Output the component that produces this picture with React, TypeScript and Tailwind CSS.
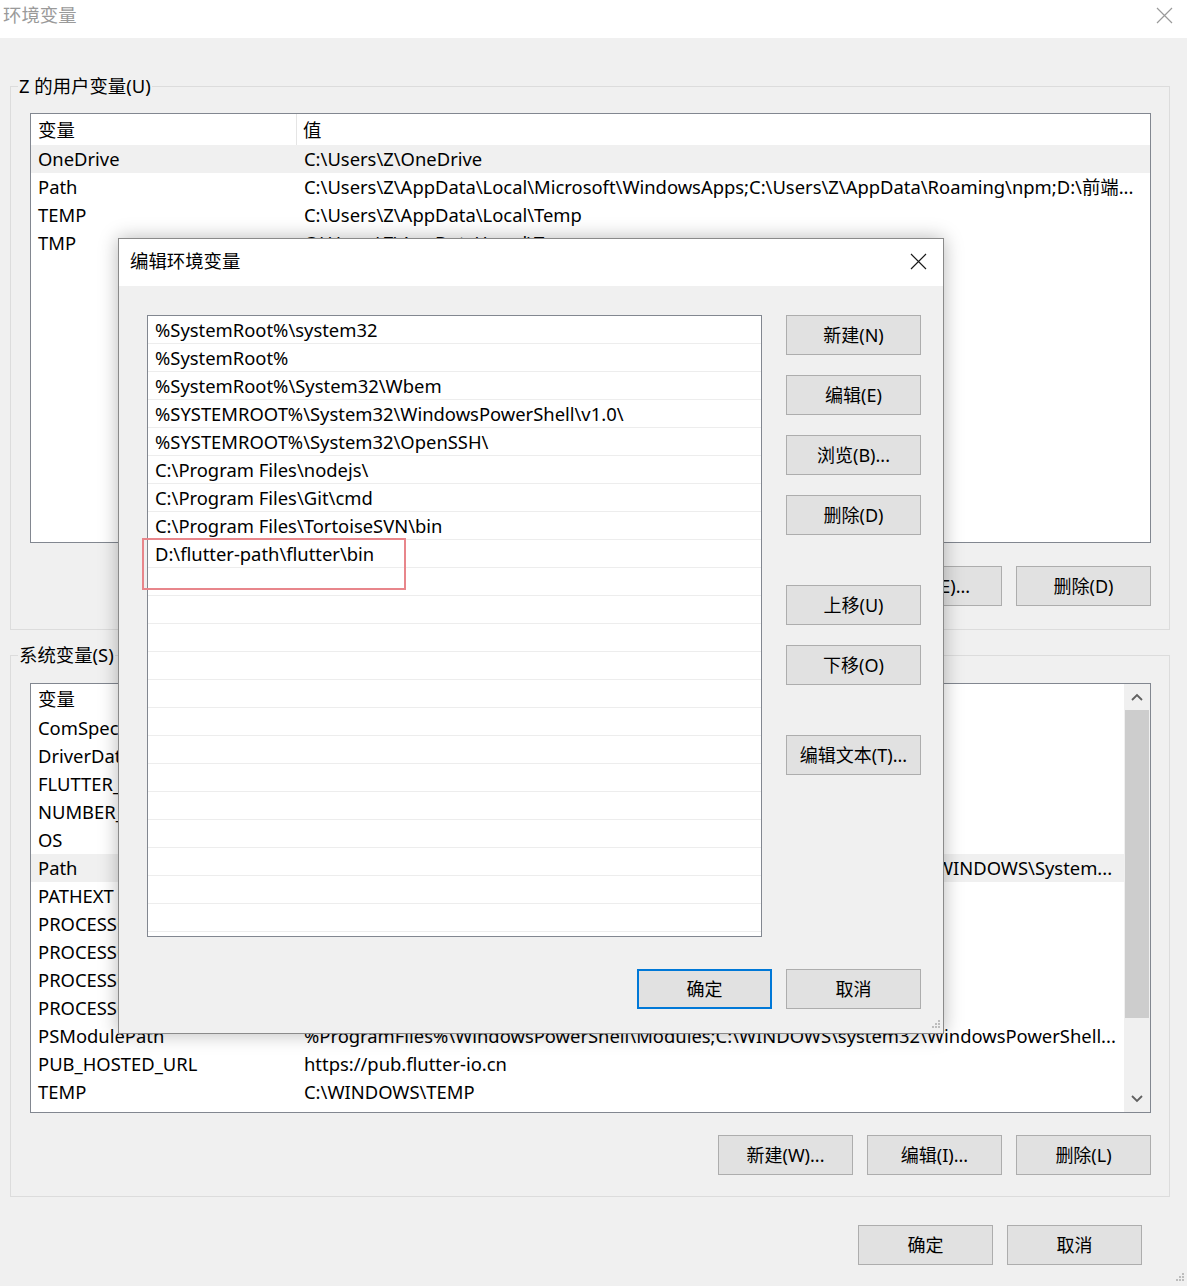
import React from 'react';

const font = "font-['Noto_Sans','Noto_Sans_CJK_SC',sans-serif]";

const userVars = [
  { name: 'OneDrive', value: 'C:\\Users\\Z\\OneDrive', selected: true },
  { name: 'Path', value: 'C:\\Users\\Z\\AppData\\Local\\Microsoft\\WindowsApps;C:\\Users\\Z\\AppData\\Roaming\\npm;D:\\前端...' },
  { name: 'TEMP', value: 'C:\\Users\\Z\\AppData\\Local\\Temp' },
  { name: 'TMP', value: 'C:\\Users\\Z\\AppData\\Local\\Temp' },
];

const systemVars = [
  { name: 'ComSpec', value: 'C:\\WINDOWS\\system32\\cmd.exe' },
  { name: 'DriverData', value: 'C:\\Windows\\System32\\Drivers\\DriverData' },
  { name: 'FLUTTER_STORAGE_BASE_URL', value: 'https://storage.flutter-io.cn' },
  { name: 'NUMBER_OF_PROCESSORS', value: '8' },
  { name: 'OS', value: 'Windows_NT' },
  { name: 'Path', value: 'C:\\WINDOWS\\system32;C:\\WINDOWS;C:\\WINDOWS\\System32\\Wbem;;C:\\WINDOWS\\System...', selected: true },
  { name: 'PATHEXT', value: '.COM;.EXE;.BAT;.CMD;.VBS;.VBE;.JS;.JSE;.WSF;.WSH;.MSC' },
  { name: 'PROCESSOR_ARCHITECTURE', value: 'AMD64' },
  { name: 'PROCESSOR_IDENTIFIER', value: 'Intel64 Family 6 Model 142 Stepping 10, GenuineIntel' },
  { name: 'PROCESSOR_LEVEL', value: '6' },
  { name: 'PROCESSOR_REVISION', value: '8e0a' },
  { name: 'PSModulePath', value: '%ProgramFiles%\\WindowsPowerShell\\Modules;C:\\WINDOWS\\system32\\WindowsPowerShell...' },
  { name: 'PUB_HOSTED_URL', value: 'https://pub.flutter-io.cn' },
  { name: 'TEMP', value: 'C:\\WINDOWS\\TEMP' },
];

const pathEntries = [
  '%SystemRoot%\\system32',
  '%SystemRoot%',
  '%SystemRoot%\\System32\\Wbem',
  '%SYSTEMROOT%\\System32\\WindowsPowerShell\\v1.0\\',
  '%SYSTEMROOT%\\System32\\OpenSSH\\',
  'C:\\Program Files\\nodejs\\',
  'C:\\Program Files\\Git\\cmd',
  'C:\\Program Files\\TortoiseSVN\\bin',
  'D:\\flutter-path\\flutter\\bin',
];

const WinButton = ({ label, primary = false, className = '' }: { label: string; primary?: boolean; className?: string }) => (
  <div
    className={
      'flex h-[40px] w-[135px] shrink-0 items-center justify-center bg-[#e1e1e1] text-[18px] text-black ' +
      (primary ? 'border-2 border-[#0078d7] ' : 'border border-[#adadad] ') +
      className
    }
  >
    {label}
  </div>
);

const CloseIcon = ({ color }: { color: string }) => (
  <svg width="17" height="17" viewBox="0 0 17 17">
    <path d="M1 1L16 16M16 1L1 16" stroke={color} strokeWidth="1.2" fill="none" />
  </svg>
);

const Grip = () => (
  <svg width="12" height="12" viewBox="0 0 12 12">
    <rect x="9" y="1" width="2" height="2" fill="#bdbdbd" />
    <rect x="6" y="4" width="2" height="2" fill="#bdbdbd" />
    <rect x="9" y="4" width="2" height="2" fill="#bdbdbd" />
    <rect x="3" y="7" width="2" height="2" fill="#bdbdbd" />
    <rect x="6" y="7" width="2" height="2" fill="#bdbdbd" />
    <rect x="9" y="7" width="2" height="2" fill="#bdbdbd" />
  </svg>
);

const VarRow = ({ name, value, selected }: { name: string; value: string; selected?: boolean }) => (
  <div className={'flex h-[28px] shrink-0 items-center whitespace-nowrap ' + (selected ? 'bg-[#f0f0f0]' : '')}>
    <div className="w-[266px] shrink-0 overflow-hidden pl-[7px]">{name}</div>
    <div className="overflow-hidden pl-[7px]">{value}</div>
  </div>
);

const Group = ({ label, children }: { label: string; children: React.ReactNode }) => (
  <div className="relative border border-[#dcdcdc] pl-[19px] pr-[18px]">
    <span className="absolute left-[7px] top-[-15px] bg-[#f0f0f0] px-[1px] leading-[28px]">{label}</span>
    {children}
  </div>
);

export default function App() {
  return (
    <div className={'relative h-[1286px] w-[1187px] overflow-hidden bg-[#f0f0f0] text-[18.4px] text-black ' + font}>
      {/* 标题栏 */}
      <div className="flex h-[38px] items-start justify-between bg-white pl-[3px] pr-[14px] pt-[1px]">
        <span className="leading-[28px] text-[#9a9a9a]">环境变量</span>
        <div className="mt-[6px]">
          <CloseIcon color="#9a9a9a" />
        </div>
      </div>

      <div className="flex flex-col pl-[10px] pr-[17px] pt-[48px]">
        {/* 用户变量 */}
        <Group label="Z 的用户变量(U)">
          <div className="mt-[26px] flex h-[430px] flex-col overflow-hidden border border-[#828790] bg-white">
            <div className="flex h-[31px] shrink-0 items-center">
              <div className="h-full w-[266px] shrink-0 border-r border-[#e5e5e5] pl-[7px] leading-[31px]">变量</div>
              <div className="pl-[6px]">值</div>
            </div>
            {userVars.map((v) => (
              <VarRow key={v.name} {...v} />
            ))}
          </div>
          <div className="mb-[23px] mt-[23px] flex justify-end gap-[14px]">
            <WinButton label="新建(N)..." />
            <WinButton label="编辑(E)..." />
            <WinButton label="删除(D)" />
          </div>
        </Group>

        <div className="h-[25px]" />

        {/* 系统变量 */}
        <Group label="系统变量(S)">
          <div className="mt-[27px] flex h-[430px] overflow-hidden border border-[#828790] bg-white">
            <div className="flex min-w-0 flex-1 flex-col">
              <div className="flex h-[30px] shrink-0 items-center">
                <div className="h-full w-[266px] shrink-0 border-r border-[#e5e5e5] pl-[7px] leading-[30px]">变量</div>
                <div className="pl-[6px]">值</div>
              </div>
              {systemVars.map((v) => (
                <VarRow key={v.name} {...v} />
              ))}
            </div>
            {/* 滚动条 */}
            <div className="flex w-[26px] shrink-0 flex-col bg-[#f0f0f0]">
              <div className="flex h-[26px] items-center justify-center">
                <svg width="12" height="8" viewBox="0 0 12 8">
                  <path d="M1 7L6 2L11 7" stroke="#606060" strokeWidth="1.8" fill="none" />
                </svg>
              </div>
              <div className="mx-[1px] h-[308px] bg-[#cdcdcd]" />
              <div className="flex-1" />
              <div className="flex h-[26px] items-center justify-center">
                <svg width="12" height="8" viewBox="0 0 12 8">
                  <path d="M1 1L6 6L11 1" stroke="#606060" strokeWidth="1.8" fill="none" />
                </svg>
              </div>
            </div>
          </div>
          <div className="mb-[21px] mt-[22px] flex justify-end gap-[14px]">
            <WinButton label="新建(W)..." />
            <WinButton label="编辑(I)..." />
            <WinButton label="删除(L)" />
          </div>
        </Group>

        <div className="mr-[28px] mt-[28px] flex justify-end gap-[14px]">
          <WinButton label="确定" />
          <WinButton label="取消" />
        </div>
      </div>

      <div className="absolute bottom-[2px] right-[2px]">
        <Grip />
      </div>

      {/* 编辑环境变量 对话框 */}
      <div className="absolute left-[118px] top-[238px] flex h-[796px] w-[826px] flex-col border border-[#8a8a8a] bg-[#f0f0f0] shadow-[0_0_18px_rgba(0,0,0,0.28)]">
        <div className="flex h-[47px] shrink-0 items-center justify-between bg-white pb-[3px] pl-[11px] pr-[16px]">
          <span>编辑环境变量</span>
          <CloseIcon color="#1a1a1a" />
        </div>

        <div className="flex pl-[28px] pr-[22px] pt-[29px]">
          <div className="flex h-[622px] w-[615px] shrink-0 flex-col overflow-hidden border border-[#828790] bg-white">
            {Array.from({ length: 23 }).map((_, i) => (
              <div key={i} className="flex h-[28px] shrink-0 items-center whitespace-nowrap border-b border-[#ededed] pl-[7px] pt-[1px]">
                {pathEntries[i] ?? ''}
              </div>
            ))}
          </div>
          <div className="ml-[24px] flex flex-col">
            <WinButton label="新建(N)" />
            <WinButton label="编辑(E)" className="mt-[20px]" />
            <WinButton label="浏览(B)..." className="mt-[20px]" />
            <WinButton label="删除(D)" className="mt-[20px]" />
            <WinButton label="上移(U)" className="mt-[50px]" />
            <WinButton label="下移(O)" className="mt-[20px]" />
            <WinButton label="编辑文本(T)..." className="mt-[50px]" />
          </div>
        </div>

        <div className="mr-[22px] mt-[32px] flex justify-end gap-[14px]">
          <WinButton label="确定" primary />
          <WinButton label="取消" />
        </div>

        <div className="absolute bottom-[2px] right-[2px]">
          <Grip />
        </div>

        {/* 标注框 */}
        <div className="absolute left-[23px] top-[299px] h-[52px] w-[264px] border-2 border-[#e8868b]" />
      </div>
    </div>
  );
}
